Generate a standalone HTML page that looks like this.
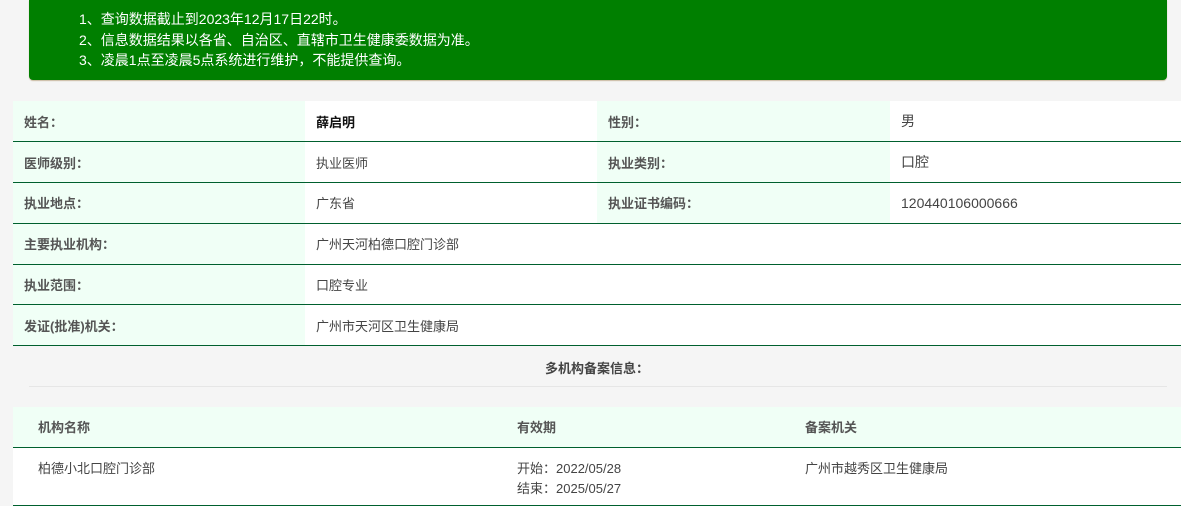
<!DOCTYPE html>
<html><head><meta charset="utf-8"><style>
*{margin:0;padding:0;box-sizing:border-box}
body{width:1181px;height:506px;background:#f5f5f5;font-family:"Liberation Sans","Noto Sans CJK SC",sans-serif;font-size:13px;color:#444;position:relative;overflow:hidden}
.note{position:absolute;left:29px;top:0;width:1138px;height:80px;background:#007f00;border-radius:0 0 4px 4px;color:#fff;font-size:14px;padding:9px 0 0 50px;line-height:20.5px;box-shadow:0 1px 1px #c9b9a0}
table{position:absolute;left:13px;width:1168px;border-collapse:collapse;table-layout:fixed}
.t1{top:101px}
.t1 td{height:40.8px;border-bottom:1px solid #00602e;padding:0 11px;vertical-align:middle}
.l{background:#f0fff6;font-weight:bold;color:#555}
.v{background:#fff;color:#444}
.title{position:absolute;left:0;width:1194px;top:358px;text-align:center;font-weight:bold;color:#444}
.line{position:absolute;left:29px;width:1138px;top:386px;border-top:1px solid #e6e6e6}
.t2{top:407px}
.t2 th{height:40px;background:#f0fff6;text-align:left;font-weight:bold;color:#555;padding-left:25px;border-bottom:1px solid #00602e}
.t2 td{background:#fff;height:58px;vertical-align:top;padding:11px 0 0 25px;line-height:20px;border-bottom:1px solid #00602e}
</style></head><body>
<div class="note">1、查询数据截止到2023年12月17日22时。<br>2、信息数据结果以各省、自治区、直辖市卫生健康委数据为准。<br>3、凌晨1点至凌晨5点系统进行维护，不能提供查询。</div>
<table class="t1">
<colgroup><col style="width:292px"><col style="width:292px"><col style="width:293px"><col style="width:291px"></colgroup>
<tr><td class="l">姓名：</td><td class="v" style="font-weight:bold;color:#111">薛启明</td><td class="l">性别：</td><td class="v" style="font-size:14px">男</td></tr>
<tr><td class="l">医师级别：</td><td class="v">执业医师</td><td class="l">执业类别：</td><td class="v" style="font-size:14px">口腔</td></tr>
<tr><td class="l">执业地点：</td><td class="v">广东省</td><td class="l">执业证书编码：</td><td class="v" style="font-size:14px">120440106000666</td></tr>
<tr><td class="l">主要执业机构：</td><td class="v" colspan="3">广州天河柏德口腔门诊部</td></tr>
<tr><td class="l">执业范围：</td><td class="v" colspan="3">口腔专业</td></tr>
<tr><td class="l">发证(批准)机关：</td><td class="v" colspan="3">广州市天河区卫生健康局</td></tr>
</table>
<div class="title">多机构备案信息：</div>
<div class="line"></div>
<table class="t2">
<colgroup><col style="width:479px"><col style="width:288px"><col></colgroup>
<tr><th>机构名称</th><th>有效期</th><th>备案机关</th></tr>
<tr><td>柏德小北口腔门诊部</td><td>开始：2022/05/28<br>结束：2025/05/27</td><td>广州市越秀区卫生健康局</td></tr>
</table>
</body></html>
